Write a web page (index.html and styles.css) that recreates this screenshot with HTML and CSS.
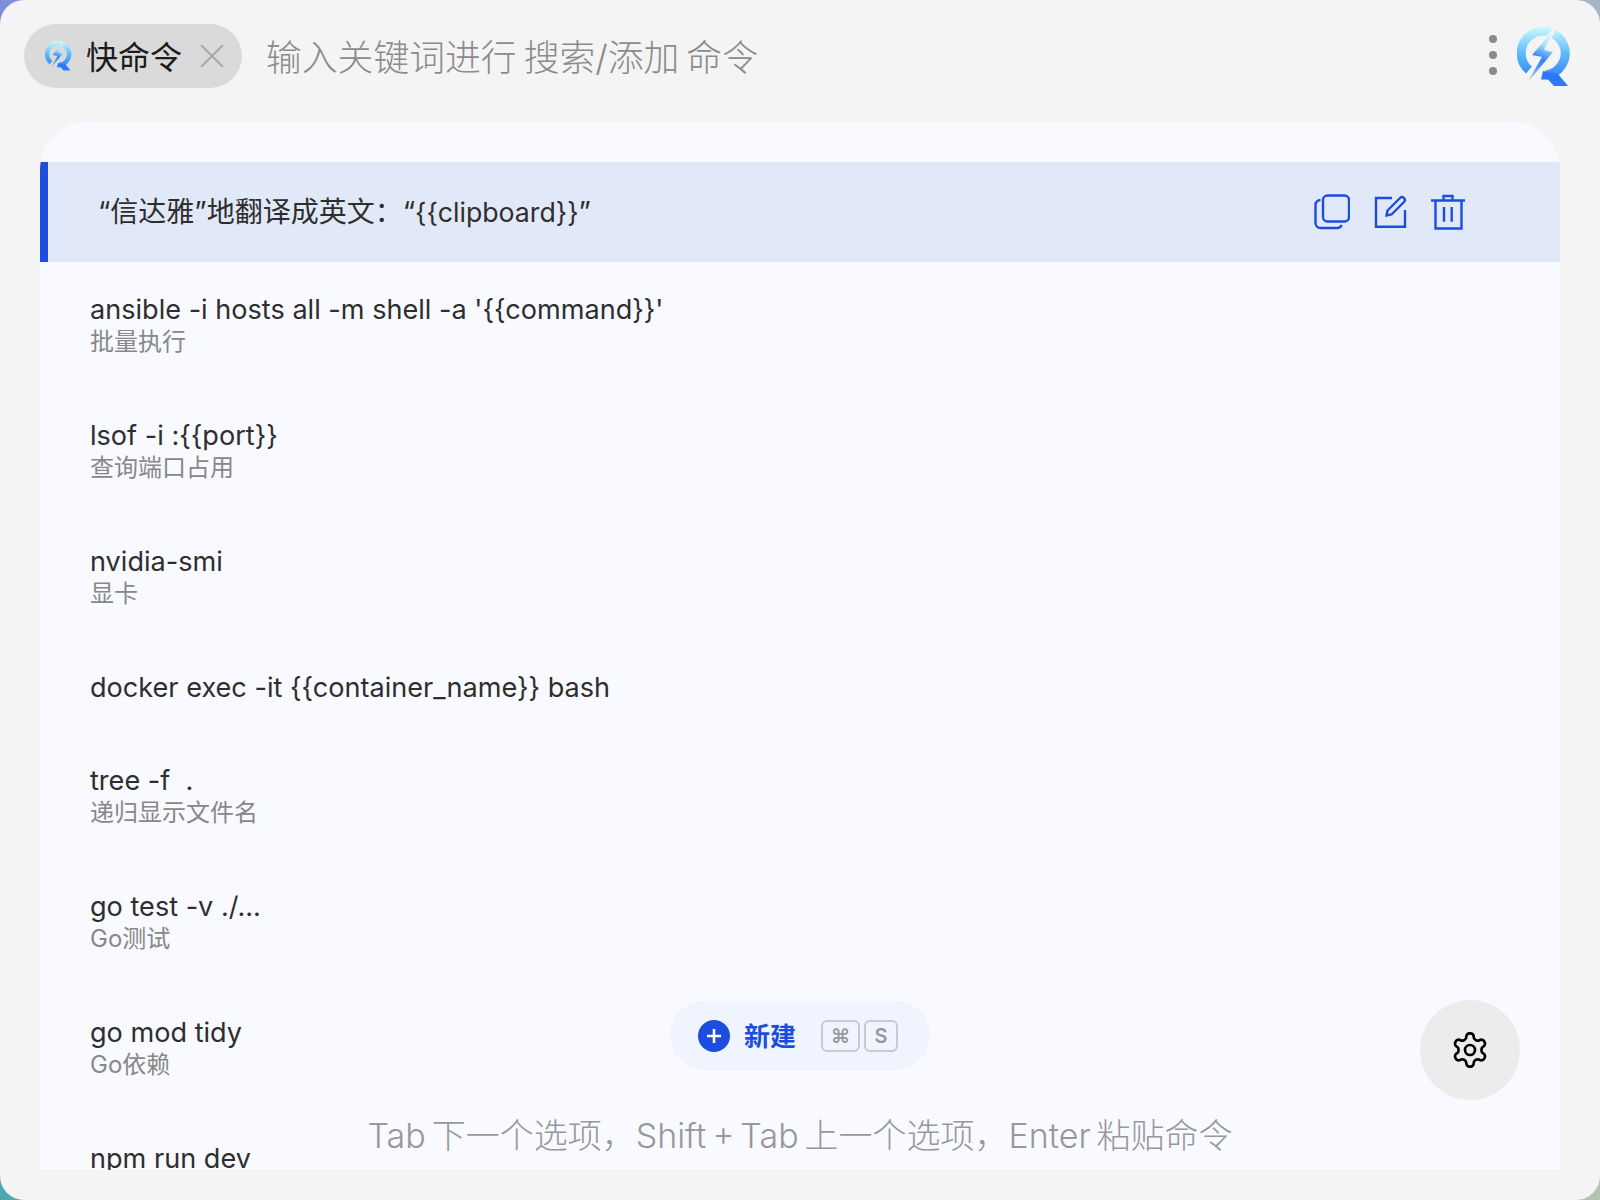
FILE: index.html
```html
<!DOCTYPE html>
<html lang="zh-CN">
<head>
<meta charset="utf-8">
<title>快命令</title>
<link rel="stylesheet" href="styles.css">
</head>
<body>
<svg class="defs" width="0" height="0" aria-hidden="true">
  <defs>
    <linearGradient id="logoRing" gradientUnits="userSpaceOnUse" x1="0" y1="0" x2="0" y2="56">
      <stop offset="0" stop-color="#ccfbff"/>
      <stop offset="0.45" stop-color="#62bdf9"/>
      <stop offset="1" stop-color="#2b78fb"/>
    </linearGradient>
    <linearGradient id="logoBolt" gradientUnits="userSpaceOnUse" x1="36" y1="2" x2="12" y2="56">
      <stop offset="0" stop-color="#f0feff"/>
      <stop offset="0.3" stop-color="#a8e4fd"/>
      <stop offset="0.55" stop-color="#2f80fb"/>
      <stop offset="0.8" stop-color="#6aaefc"/>
      <stop offset="1" stop-color="#d5e9ff"/>
    </linearGradient>
    <symbol id="logo" viewBox="0 0 54 60">
      <path d="M12 43 A22 22 0 1 1 29 48" fill="none" stroke="url(#logoRing)" stroke-width="9"/>
      <path d="M26 44 L41 47 L51 59 L37 59 L31 52.500 L24 52.500 Z" fill="#2b78fb"/>
      <path class="logo-halo" d="M38 1 L15 28 L25 30 L10 56 L36 25 L27 23 Z"/>
      <path d="M38 1 L15 28 L25 30 L10 56 L36 25 L27 23 Z" fill="url(#logoBolt)"/>
    </symbol>
  </defs>
</svg>
<main class="window">
  <header class="topbar">
    <div class="pill">
      <svg class="pill-logo"><use href="#logo"/></svg>
      <span class="pill-name">快命令</span>
      <svg class="pill-close" viewBox="0 0 24 24"><path d="M1 1 L23 23 M23 1 L1 23"/></svg>
    </div>
    <div class="placeholder">输入关键词进行 搜索/添加 命令</div>
    <div class="dots"><i></i><i></i><i></i></div>
    <svg class="top-logo"><use href="#logo"/></svg>
  </header>
  <section class="panel">
    <div class="list">
      <div class="row row-active">
        <div class="row-text"><div class="title title-active"><span class="cjk">“信达雅”地翻译成英文：“</span>{{clipboard}}<span class="cjk">”</span></div></div>
        <div class="actions">
          <svg viewBox="0 0 36 36"><rect x="9" y="1.500" width="26" height="26" rx="4.500"/><path d="M6.500 6 A5 5 0 0 0 1.500 11 V29 A5 5 0 0 0 6.500 34 H23 A5 5 0 0 0 27.700 31"/></svg>
          <svg viewBox="0 0 36 36"><path d="M20 4 H4 V32.700 H33 V16"/><path d="M14.500 21.500 L15.500 16.500 L28 4 A2.600 2.600 0 0 1 32 8 L19.500 20.500 Z"/></svg>
          <svg viewBox="0 0 36 36"><path d="M1 6.500 H35 M5.500 6.500 V34.500 H31.500 V6.500 M13.500 6.500 V2 H22.500 V6.500 M14 13 V27.700 M21.700 13 V27.700"/></svg>
        </div>
      </div>
      <div class="row"><div class="row-text"><div class="title">ansible -i hosts all -m shell -a '{{command}}'</div><div class="sub">批量执行</div></div></div>
      <div class="row"><div class="row-text"><div class="title">lsof -i :{{port}}</div><div class="sub">查询端口占用</div></div></div>
      <div class="row"><div class="row-text"><div class="title">nvidia-smi</div><div class="sub">显卡</div></div></div>
      <div class="row row-single"><div class="row-text"><div class="title">docker exec -it {{container_name}} bash</div></div></div>
      <div class="row"><div class="row-text"><div class="title">tree -f&nbsp; .</div><div class="sub">递归显示文件名</div></div></div>
      <div class="row"><div class="row-text"><div class="title">go test -v ./...</div><div class="sub">Go测试</div></div></div>
      <div class="row"><div class="row-text"><div class="title">go mod tidy</div><div class="sub">Go依赖</div></div></div>
      <div class="row row-last"><div class="row-text"><div class="title">npm run dev</div></div></div>
    </div>
    <div class="new-btn">
      <svg class="plus" viewBox="0 0 32 32"><circle cx="16" cy="16" r="16"/><path d="M16 9 V23 M9 16 H23"/></svg>
      <span class="new-label">新建</span>
      <span class="keys"><kbd class="key key-cmd">⌘</kbd><kbd class="key">S</kbd></span>
    </div>
    <div class="gear">
      <svg viewBox="0 0 24 24"><path d="M12.220 2h-.44a2 2 0 0 0-2 2v.18a2 2 0 0 1-1 1.730l-.43.25a2 2 0 0 1-2 0l-.15-.08a2 2 0 0 0-2.730.73l-.22.38a2 2 0 0 0 .73 2.730l.15.1a2 2 0 0 1 1 1.720v.51a2 2 0 0 1-1 1.740l-.15.09a2 2 0 0 0-.73 2.730l.22.38a2 2 0 0 0 2.730.73l.15-.08a2 2 0 0 1 2 0l.43.25a2 2 0 0 1 1 1.730V20a2 2 0 0 0 2 2h.44a2 2 0 0 0 2-2v-.18a2 2 0 0 1 1-1.730l.43-.25a2 2 0 0 1 2 0l.15.08a2 2 0 0 0 2.730-.73l.22-.39a2 2 0 0 0-.73-2.730l-.15-.08a2 2 0 0 1-1-1.740v-.5a2 2 0 0 1 1-1.740l.15-.09a2 2 0 0 0 .73-2.730l-.22-.38a2 2 0 0 0-2.730-.73l-.15.08a2 2 0 0 1-2 0l-.43-.25a2 2 0 0 1-1-1.730V4a2 2 0 0 0-2-2z"/><circle cx="12" cy="12" r="3"/></svg>
    </div>
    <div class="hint">Tab 下一个选项，Shift + Tab 上一个选项，Enter 粘贴命令</div>
  </section>
</main>
</body>
</html>
```
FILE: styles.css
```css
* { box-sizing: border-box; }
html, body { height: 100%; }
body {
  margin: 0;
  overflow: hidden;
  font-family: Inter, "Noto Sans CJK SC", sans-serif;
  background:
    linear-gradient(#7d8ddc, #7d8ddc) left top / 50% 50% no-repeat,
    linear-gradient(#a9b5c6, #a9b5c6) right top / 50% 50% no-repeat,
    linear-gradient(#4fa5b0, #4fa5b0) left bottom / 50% 50% no-repeat,
    linear-gradient(#b4c2b4, #b4c2b4) right bottom / 50% 50% no-repeat;
}
.defs { position: absolute; }
.logo-halo { fill: var(--halo); stroke: var(--halo); stroke-width: 3; }
.window {
  width: 1600px;
  height: 1200px;
  border-radius: 24px;
  background: #f4f4f4;
  display: flex;
  flex-direction: column;
  padding: 0 40px 30px;
}
.topbar {
  height: 122px;
  flex: none;
  display: flex;
  align-items: flex-start;
  margin: 0 -40px;
  padding: 24px 29px 0 24px;
}
.pill {
  width: 218px;
  height: 64px;
  border-radius: 32px;
  background: #dadada;
  display: flex;
  align-items: center;
  padding-left: 21px;
  --halo: #dadada;
}
.pill-logo { width: 27px; height: 30px; margin-right: 14px; }
.pill-name { font-size: 32px; color: #1c1c1c; line-height: 1; padding-top: 4px; }
.pill-close { width: 24px; height: 24px; margin-left: 18px; fill: none; stroke: #a6a6a6; stroke-width: 1.8; }
.placeholder { margin-left: 24px; height: 64px; line-height: 68px; font-size: 35.800px; font-weight: 300; word-spacing: -3px; color: #8b8b8b; white-space: nowrap; flex: 1; }
.dots { display: flex; flex-direction: column; gap: 8px; margin-top: 11px; margin-right: 20px; }
.dots i { display: block; width: 8px; height: 8px; border-radius: 50%; background: #8a8a8a; }
.top-logo { width: 54px; height: 60px; margin-top: 3px; --halo: #f4f4f4; }
.panel {
  flex: 1;
  position: relative;
  overflow: hidden;
  background: #f8faff;
  border-radius: 48px 48px 0 0;
  padding-top: 40px;
}
.row {
  height: 126px;
  padding: 0 50px;
  display: flex;
  align-items: center;
  justify-content: space-between;
}
.row-single { height: 93px; padding-top: 2px; }
.row-last .row-text { min-height: 64px; }
.row-active {
  height: 100px;
  background: #e1e8f7;
  border-left: 8px solid #1d4ddf;
  padding: 0 94px 0 50px;
}
.title { font-size: 27.100px; line-height: 34px; color: #2e2e2e; white-space: nowrap; }
.title-active { font-size: 26.700px; }
.cjk { font-size: 28px; }
.sub { font-size: 24px; line-height: 30px; color: #888; }
.actions { display: flex; gap: 22px; }
.actions svg { width: 36px; height: 36px; fill: none; stroke: #1d4ddf; stroke-width: 2.400; }
.new-btn {
  position: absolute;
  left: 630px;
  top: 879px;
  width: 260px;
  height: 69px;
  border-radius: 35px;
  background: #f0f4fe;
  display: flex;
  align-items: center;
  padding-left: 28px;
}
.plus { width: 32px; height: 32px; fill: #1d4ddf; stroke: #fff; stroke-width: 2.600; }
.plus path { fill: none; }
.plus circle { stroke: none; }
.new-label { margin-left: 14px; font-size: 26px; font-weight: 700; color: #1d4ddf; line-height: 1; padding-top: 2px; }
.keys { display: flex; gap: 4px; margin-left: 25px; }
.key {
  height: 32px;
  min-width: 34px;
  padding: 0 6px;
  border: 2px solid #c6cad6;
  border-radius: 6px;
  display: flex;
  align-items: center;
  justify-content: center;
  font-family: Inter, "DejaVu Sans", sans-serif;
  font-size: 20px;
  font-weight: 600;
  color: #97979c;
}
.key-cmd { min-width: 39px; }
.gear {
  position: absolute;
  left: 1380px;
  top: 878px;
  width: 100px;
  height: 100px;
  border-radius: 50%;
  background: #ececec;
  display: flex;
  align-items: center;
  justify-content: center;
}
.gear svg { width: 40px; height: 40px; fill: none; stroke: #000; stroke-width: 1.600; }
.hint {
  position: absolute;
  left: 0;
  right: 0;
  top: 992px;
  text-align: center;
  font-size: 34px;
  word-spacing: -3.600px;
  line-height: 44px;
  font-weight: 300;
  color: #97979c;
}
```
